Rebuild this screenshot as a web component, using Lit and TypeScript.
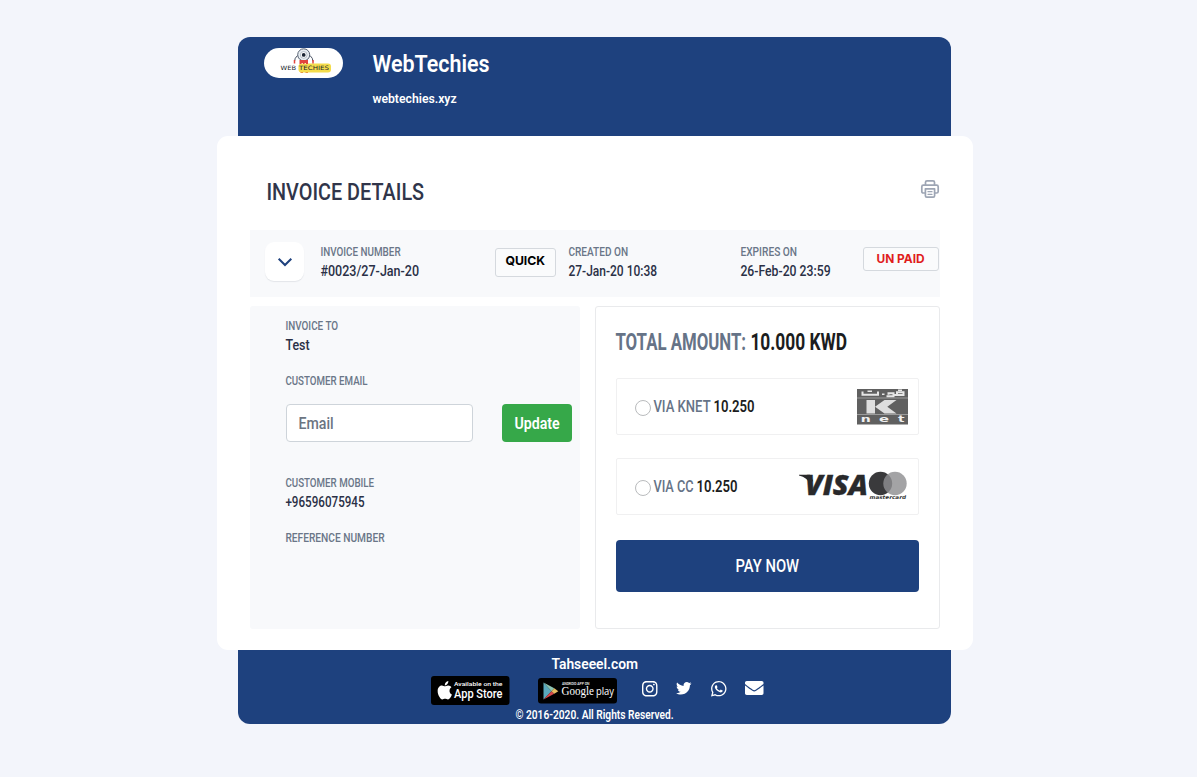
import { LitElement, html, svg, css } from "lit";
import { customElement } from "lit/decorators.js";

/* A run of condensed text: the glyphs are narrowed to the given ink width. */
const t = (text: string, width: number, size: number, cls = "") => html`
  <svg class="t ${cls}" width=${width} height=${size} font-size=${size}>
    <text x="-0.6" y=${size * 0.85} textLength=${width + 1.2} lengthAdjust="spacingAndGlyphs">${text}</text>
  </svg>`;

const field = (label: string, lw: number, value = "", vw = 0) => html`
  <div class="field">
    ${t(label, lw, 12, "label")}
    ${value ? t(value, vw, 14, "value") : ""}
  </div>`;

const glyph = (d: string, box: string, w: number, h: number) => html`
  <svg width=${w} height=${h} viewBox=${box} fill="currentColor"><path d=${d}></path></svg>`;

const INSTAGRAM = "M224.1 141c-63.6 0-114.9 51.3-114.9 114.9s51.3 114.9 114.9 114.9S339 319.5 339 255.9 287.7 141 224.1 141zm0 189.6c-41.1 0-74.7-33.5-74.7-74.7s33.5-74.7 74.7-74.7 74.7 33.5 74.7 74.7-33.6 74.7-74.7 74.7zm146.4-194.3c0 14.9-12 26.8-26.8 26.8-14.9 0-26.8-12-26.8-26.8s12-26.8 26.8-26.8 26.8 12 26.8 26.8zm76.1 27.2c-1.7-35.9-9.9-67.7-36.2-93.9-26.2-26.2-58-34.4-93.9-36.2-37-2.1-147.9-2.1-184.9 0-35.8 1.7-67.6 9.9-93.9 36.1s-34.4 58-36.2 93.9c-2.1 37-2.1 147.9 0 184.9 1.7 35.9 9.9 67.7 36.2 93.9s58 34.4 93.9 36.2c37 2.1 147.9 2.1 184.9 0 35.9-1.7 67.7-9.9 93.9-36.2 26.2-26.2 34.4-58 36.2-93.9 2.1-37 2.1-147.8 0-184.8zM398.8 388c-7.8 19.6-22.9 34.7-42.6 42.6-29.5 11.7-99.5 9-132.1 9s-102.7 2.6-132.1-9c-19.6-7.8-34.7-22.9-42.6-42.6-11.7-29.5-9-99.5-9-132.1s-2.6-102.7 9-132.1c7.8-19.6 22.9-34.7 42.6-42.6 29.5-11.7 99.5-9 132.1-9s102.7-2.6 132.1 9c19.6 7.8 34.7 22.9 42.6 42.6 11.7 29.5 9 99.5 9 132.1s2.7 102.7-9 132.1z";
const TWITTER = "M459.37 151.716c.325 4.548.325 9.097.325 13.645 0 138.72-105.583 298.558-298.558 298.558-59.452 0-114.68-17.219-161.137-47.106 8.447.974 16.568 1.299 25.34 1.299 49.055 0 94.213-16.568 130.274-44.832-46.132-.975-84.792-31.188-98.112-72.772 6.498.974 12.995 1.624 19.818 1.624 9.421 0 18.843-1.3 27.614-3.573-48.081-9.747-84.143-51.98-84.143-102.985v-1.299c13.969 7.797 30.214 12.67 47.431 13.319-28.264-18.843-46.781-51.005-46.781-87.391 0-19.492 5.197-37.36 14.294-52.954 51.655 63.675 129.3 105.258 216.365 109.807-1.624-7.797-2.599-15.918-2.599-24.04 0-57.828 46.782-104.934 104.934-104.934 30.213 0 57.502 12.67 76.67 33.137 23.715-4.548 46.456-13.32 66.599-25.34-7.798 24.366-24.366 44.833-46.132 57.827 21.117-2.273 41.584-8.122 60.426-16.243-14.292 20.791-32.161 39.308-52.628 54.253z";
const WHATSAPP = "M380.9 97.1C339 55.1 283.2 32 223.9 32c-122.4 0-222 99.6-222 222 0 39.1 10.2 77.3 29.6 111L0 480l117.7-30.9c32.4 17.7 68.9 27 106.1 27h.1c122.3 0 224.1-99.6 224.1-222 0-59.3-25.2-115-67.1-157zm-157 341.6c-33.2 0-65.7-8.9-94-25.7l-6.7-4-69.8 18.3L72 359.2l-4.4-7c-18.5-29.4-28.2-63.3-28.2-98.2 0-101.7 82.8-184.5 184.6-184.5 49.3 0 95.6 19.2 130.4 54.1 34.8 34.9 56.2 81.2 56.1 130.5 0 101.8-84.9 184.6-186.6 184.6zm101.2-138.2c-5.5-2.8-32.8-16.2-37.9-18-5.1-1.9-8.8-2.8-12.5 2.8-3.7 5.6-14.3 18-17.6 21.8-3.2 3.7-6.5 4.2-12 1.4-32.6-16.3-54-29.1-75.5-66-5.7-9.8 5.7-9.1 16.3-30.3 1.8-3.7.9-6.9-.5-9.7-1.4-2.8-12.5-30.1-17.1-41.2-4.5-10.8-9.1-9.3-12.5-9.5-3.2-.2-6.9-.2-10.6-.2-3.7 0-9.7 1.4-14.8 6.9-5.1 5.6-19.4 19-19.4 46.3 0 27.3 19.9 53.7 22.6 57.4 2.8 3.7 39.1 59.7 94.8 83.8 35.2 15.2 49 16.5 66.6 13.9 10.7-1.6 32.8-13.4 37.4-26.4 4.6-13 4.6-24.1 3.2-26.4-1.3-2.5-5-3.9-10.5-6.6z";
const MAIL = "M502.3 190.8c3.9-3.1 9.7-.2 9.7 4.7V400c0 26.5-21.5 48-48 48H48c-26.5 0-48-21.5-48-48V195.6c0-5 5.7-7.8 9.7-4.7 22.4 17.4 52.1 39.5 154.1 113.6 21.1 15.4 56.7 47.8 92.2 47.6 35.7.3 72-32.8 92.3-47.6 102-74.1 131.6-96.3 154-113.7zM256 320c23.2.4 56.6-29.2 73.4-41.4 132.7-96.3 142.8-104.7 173.4-128.7 5.8-4.5 9.2-11.5 9.2-18.9v-19c0-26.5-21.5-48-48-48H48c-26.5 0-48 21.5-48 48v19c0 7.4 3.4 14.3 9.2 18.9 30.6 23.9 40.7 32.4 173.4 128.7 16.8 12.2 50.2 41.8 73.4 41.4z";
const APPLE = "M318.7 268.7c-.2-36.7 16.4-64.4 50-84.8-18.8-26.9-47.2-41.7-84.7-44.6-35.5-2.8-74.3 20.7-88.5 20.7-15 0-49.4-19.7-76.4-19.7C63.3 141.2 4 184.8 4 273.5q0 39.3 14.4 81.2c12.8 36.7 59 126.7 107.2 125.2 25.2-.6 43-17.9 75.8-17.9 31.8 0 48.3 17.9 76.4 17.9 48.6-.7 90.4-82.5 102.6-119.3-65.2-30.7-61.7-90-61.7-91.9zm-56.6-164.2c27.3-32.4 24.8-61.9 24-72.5-24.1 1.4-52 16.4-67.9 34.9-17.5 19.8-27.8 44.3-25.6 71.9 26.1 2 49.9-11.4 69.5-34.3z";

const fit = (x: number, y: number, w: number, size: number, text: string, extra = "") => svg`
  <text class=${extra} x=${x} y=${y} font-size=${size} textLength=${w} lengthAdjust="spacingAndGlyphs">${text}</text>`;

@customElement("app-root")
export class AppRoot extends LitElement {
  static styles = css`
    :host {
      display: block;
      box-sizing: border-box;
      height: 777px;
      padding: 37px 224px 0 217px;
      background: #f3f5fb;
      font-family: Roboto, "Liberation Sans", sans-serif;
      overflow: hidden;
    }
    svg { display: block; flex: none; overflow: visible; }
    .t { fill: currentColor; }
    .field { display: flex; flex: none; flex-direction: column; gap: 6px; }
    .label { color: #6a7688; font-weight: 500; }
    .value { color: #2a3046; font-weight: 500; }

    .header {
      display: flex;
      gap: 30px;
      box-sizing: border-box;
      height: 99.4px;
      margin: 0 21.6px 0 21.4px;
      padding: 11px 25.6px 0;
      border-radius: 12px 12px 0 0;
      background: #1e417e;
      color: #fff;
    }
    .logo { width: 79px; height: 29.5px; border-radius: 15px; background: #fff; }
    .brand { display: flex; flex-direction: column; gap: 16px; padding-top: 3.2px; font-weight: 600; }

    .card {
      box-sizing: border-box;
      height: 513.8px;
      padding: 43.6px 33.5px 0 33px;
      border-radius: 11px;
      background: #fff;
    }
    .title {
      display: flex;
      justify-content: space-between;
      height: 50.5px;
      padding: 0 1px 0 16.5px;
      color: #30354a;
      font-weight: 500;
    }
    .meta { display: flex; align-items: flex-start; height: 66.5px; background: #f8f9fb; }
    .toggle {
      display: flex;
      align-items: center;
      justify-content: center;
      width: 39px;
      height: 39px;
      margin: 12px 16.5px 0 15.3px;
      border-radius: 9px;
      background: #fff;
      box-shadow: 0 1px 1px #e3e5e9;
    }
    .meta .field { padding-top: 16px; }
    .number { width: 174px; }
    .created { width: 171.5px; margin-left: 13.3px; }
    .expires { width: 122px; }
    .tag {
      display: flex;
      justify-content: center;
      box-sizing: border-box;
      border: 1px solid #d5d9de;
      border-radius: 3px;
      font-family: Inter, sans-serif;
      font-weight: 700;
      background: #fafbfc;
    }
    .quick { width: 61px; height: 29px; margin-top: 17.5px; padding-top: 5.5px; color: #000; }
    .unpaid { width: 77px; height: 24px; margin-top: 16.7px; padding-top: 5px; color: #e01d1d; }

    .panels { display: flex; justify-content: space-between; margin-top: 9.5px; }
    .customer {
      display: flex;
      flex-direction: column;
      box-sizing: border-box;
      width: 330px;
      height: 323px;
      padding: 13.8px 8px 0 36px;
      border-radius: 3px;
      background: #f8f9fb;
    }
    .email-label { margin-top: 22.3px; }
    .email { display: flex; justify-content: space-between; margin: 17.6px 0 35.6px; }
    .input, .update { display: flex; align-items: center; box-sizing: border-box; height: 37.5px; border-radius: 4px; }
    .input { width: 186.5px; padding-left: 12px; border: 1px solid #ced4da; background: #fff; color: #6c7582; font-weight: 500; }
    .update { justify-content: center; width: 70px; background: #36a849; color: #fff; font-weight: 600; }
    .reference { margin-top: 22.5px; }

    .payment {
      box-sizing: border-box;
      width: 345px;
      height: 323px;
      padding: 22.2px 20px 0;
      border: 1px solid #e9eaec;
      border-radius: 3px;
    }
    .total { display: flex; gap: 5.5px; height: 48.3px; padding-left: .3px; font-weight: 700; }
    .what { color: #667387; }
    .strong { color: #1b1d20; }
    .option {
      display: flex;
      align-items: center;
      box-sizing: border-box;
      height: 57px;
      margin-bottom: 23px;
      padding: 0 9.5px 0 18.5px;
      border: 1.5px solid #f0f0f1;
      border-radius: 2px;
    }
    .option .what { margin-right: 4px; font-weight: 500; }
    .option .strong { font-weight: 600; }
    .radio { box-sizing: border-box; width: 16px; height: 16px; margin: 3px 2.8px 0 0; border: 1px solid #b9bbbd; border-radius: 50%; background: #fff; }
    .art { margin-left: auto; }
    .pay {
      display: flex;
      align-items: center;
      justify-content: center;
      height: 52px;
      margin-top: 25px;
      border-radius: 4px;
      background: #1e417e;
      color: #fff;
      font-weight: 500;
    }

    .footer {
      display: flex;
      flex-direction: column;
      align-items: center;
      box-sizing: border-box;
      height: 73.5px;
      margin: 0 21.6px 0 21.4px;
      padding-top: 5.5px;
      border-radius: 0 0 12px 12px;
      background: #1e417e;
      color: #fff;
      font-weight: 600;
    }
    .links { display: flex; align-items: center; height: 29px; margin: 4.8px 0 4px 4.6px; }
    .google { margin: 0 24.5px 0 29px; }
    .social { display: flex; align-items: center; gap: 19px; height: 15.5px; margin-bottom: 4px; }
    .tech { font-family: "DejaVu Sans", sans-serif; font-weight: 400; }
    .book { font-family: "Liberation Serif", serif; font-weight: 400; }
    .sans { font-family: Roboto, sans-serif; font-weight: 500; }
    .light { font-family: "Open Sans", sans-serif; font-weight: 400; }
    .visa { font-family: "Open Sans", sans-serif; font-weight: 800; font-style: italic; }
    .mc { font-family: "DejaVu Sans", sans-serif; font-weight: 700; font-style: italic; }
    .knet { font-family: "DejaVu Sans", sans-serif; font-weight: 700; }
  `;

  private logo() {
    return html`<svg class="logo" viewBox="0 0 79 29.5">
      <rect x="34.5" y="15.5" width="32.5" height="9" rx="3" fill="#f4dc4b"></rect>
      <path d="M33.5 7.5q-3 2.5-3 6M46 7.5q3 2.5 3 6" fill="none" stroke="#4a5364" stroke-width="1"></path>
      <path d="M30.5 12v3.5M49 12v3.5" fill="none" stroke="#e2453e" stroke-width="1.5"></path>
      <circle cx="39.7" cy="6.8" r="6" fill="#e8eef2" stroke="#576273" stroke-width="1"></circle>
      <path d="M35.5 12h8.500v4h-2v-1h-1.500v1h-1.500v-1h-1.500v1h-2z" fill="#e2453e"></path>
      <path d="M36.5 24.500h2.500M41.500 24.500H44" stroke="#e89a3e" stroke-width="1"></path>
      <circle cx="39.7" cy="6.900" r="3.400" fill="#fff" stroke="#8c9baa" stroke-width=".6"></circle>
      <circle cx="39.7" cy="6.900" r="1.900" fill="#182433"></circle>
      ${svg`<g fill="#20242b">${fit(16.5, 22, 15.5, 6, "WEB", "tech")}${fit(35, 22, 30, 6, "TECHIES", "tech")}</g>`}
    </svg>`;
  }

  private printer() {
    return html`<svg width="18" height="18" viewBox="0 0 18 18" fill="none" stroke="#9da5b4" stroke-width="1.7" stroke-linejoin="round" stroke-linecap="round">
      <path d="M4.5 5V2.200Q4.500.8 6 .8h6q1.500 0 1.500 1.400V5"></path>
      <path d="M4.3 13H2.400Q.8 13 .8 11.400V6.800Q.8 5.200 2.400 5.200h13.200q1.600 0 1.600 1.600v4.600q0 1.600-1.600 1.600h-1.900"></path>
      <path d="M4.4 8.800h9.200v7q0 1.400-1.400 1.400H5.800q-1.400 0-1.400-1.400z"></path>
      <path d="M7 11.7h4M7 14.300h4" stroke-width="1.3"></path>
    </svg>`;
  }

  private knet() {
    return html`<svg class="art" width="51" height="35.5" viewBox="0 0 51 35.5">
      <rect width="51" height="35.5" fill="#606060"></rect>
      <path d="M0 9h51M0 25.500h51" stroke="#b4b4b4" stroke-width=".7"></path>
      <path d="M9.5 11h8.500v13.500H9.500zM18 17.700L27.500 11h12l-9.200 6.700 9.200 6.800h-12z" fill="#dedede"></path>
      <path d="M5.5 2.500v3.200H21V2.500M29.500 7.300h7V4.300h-5v1.500M36.500 6h10V3.200h-6.500v2" fill="none" stroke="#e6e6e6" stroke-width="2"></path>
      <path d="M10.5 2.200h4.500M25 5.300h2.500M41 1.300h4" stroke="#e6e6e6" stroke-width="1.5"></path>
      ${svg`<g fill="#f0f0f0">${fit(3.8, 33.2, 10, 9, "n", "knet")}${fit(22, 33.2, 10, 9, "e", "knet")}${fit(41, 33.2, 6.5, 9, "t", "knet")}</g>`}
    </svg>`;
  }

  private cards() {
    return html`<svg class="art" width="109" height="30" viewBox="0 0 109 30">
      <path d="M0 3.800h11l3 6-3 3.500Q8.500 6.500 0 4.600z" fill="#29292b"></path>
      ${svg`<g fill="#29292b" stroke="#29292b" stroke-width=".4">${fit(6, 24, 63, 28.2, "VISA", "visa")}</g>`}
      <circle cx="81.5" cy="12.5" r="11.7" fill="#3a3a3c"></circle>
      <circle cx="96" cy="12.5" r="11.7" fill="#8f8f91" fill-opacity=".82"></circle>
      ${svg`<g fill="#333">${fit(70.5, 28.3, 36.5, 5, "mastercard", "mc")}</g>`}
    </svg>`;
  }

  private appStore() {
    return html`<svg width="78.5" height="29" viewBox="0 0 78.5 29">
      <rect width="78.5" height="29" rx="3" fill="#000"></rect>
      <svg x="6.5" y="5" width="14.5" height="18.5" viewBox="0 30 384 452" preserveAspectRatio="none" fill="#fff"><path d=${APPLE}></path></svg>
      ${svg`<g fill="#fff">${fit(23, 10.2, 48.5, 5.6, "Available on the", "sans")}${fit(23, 21.9, 48.5, 12.3, "App Store", "sans")}</g>`}
    </svg>`;
  }

  private googlePlay() {
    return html`<svg class="google" width="79" height="25.5" viewBox="0 0 79 25.5">
      <rect width="79" height="25.5" rx="3" fill="#000"></rect>
      <path d="M5.5 4.500v17l8-8.300z" fill="#5aa9bd"></path>
      <path d="M5.5 4.500l8 8.700 2.800-3z" fill="#8cc4b1"></path>
      <path d="M5.5 21.500l8-8.300 2.800 2.600z" fill="#d5494b"></path>
      <path d="M16.3 10.200l4 3-4 2.600-2.800-2.600z" fill="#e7bd62"></path>
      ${svg`<g fill="#fff">${fit(24, 6.6, 27.5, 3.2, "ANDROID APP ON", "sans")}${fit(23.5, 17.4, 32.5, 13, "Google", "book")}${fit(58, 17.4, 18, 11, "play", "light")}</g>`}
    </svg>`;
  }

  render() {
    return html`
      <header class="header">
        ${this.logo()}
        <div class="brand">
          ${t("WebTechies", 116, 24.5)}
          ${t("webtechies.xyz", 83, 13.5)}
        </div>
      </header>

      <main class="card">
        <div class="title">${t("INVOICE DETAILS", 156.5, 23.5)}${this.printer()}</div>

        <section class="meta">
          <div class="toggle">
            <svg width="14" height="8" viewBox="0 0 14 8" fill="none" stroke="#1e417e" stroke-width="2"><path d="M.7.7L7 7l6.3-6.3"></path></svg>
          </div>
          <div class="number">${field("INVOICE NUMBER", 79, "#0023/27-Jan-20", 97.5)}</div>
          <div class="tag quick">${t("QUICK", 38.5, 12.4)}</div>
          <div class="created">${field("CREATED ON", 58.5, "27-Jan-20 10:38", 87.5)}</div>
          <div class="expires">${field("EXPIRES ON", 55.5, "26-Feb-20 23:59", 89)}</div>
          <div class="tag unpaid">${t("UN PAID", 47, 12.2)}</div>
        </section>

        <div class="panels">
          <section class="customer">
            ${field("INVOICE TO", 51.5, "Test", 23)}
            <div class="email-label">${field("CUSTOMER EMAIL", 81)}</div>
            <div class="email">
              <div class="input">${t("Email", 34, 16)}</div>
              <div class="update">${t("Update", 44, 16)}</div>
            </div>
            ${field("CUSTOMER MOBILE", 87.5, "+96596075945", 78)}
            <div class="reference">${field("REFERENCE NUMBER", 98)}</div>
          </section>

          <section class="payment">
            <div class="total">${t("TOTAL AMOUNT:", 129.5, 24, "what")}${t("10.000 KWD", 95.5, 24, "strong")}</div>
            <div class="option">
              <span class="radio"></span>
              ${t("VIA KNET", 56, 16, "what")}${t("10.250", 40, 16, "strong")}${this.knet()}
            </div>
            <div class="option">
              <span class="radio"></span>
              ${t("VIA CC", 39, 16, "what")}${t("10.250", 40, 16, "strong")}${this.cards()}
            </div>
            <div class="pay">${t("PAY NOW", 62.5, 17.6)}</div>
          </section>
        </div>
      </main>

      <footer class="footer">
        ${t("Tahseeel.com", 85.5, 15.5)}
        <div class="links">
          ${this.appStore()}
          ${this.googlePlay()}
          <div class="social">
            ${glyph(INSTAGRAM, "0 32 448 448", 15.5, 15.5)}
            ${glyph(TWITTER, "0 48 512 416", 15.5, 12.6)}
            ${glyph(WHATSAPP, "0 32 448 448", 15.5, 15.5)}
            ${glyph(MAIL, "0 64 512 384", 18.5, 14)}
          </div>
        </div>
        ${t("© 2016-2020. All Rights Reserved.", 157, 12)}
      </footer>
    `;
  }
}
